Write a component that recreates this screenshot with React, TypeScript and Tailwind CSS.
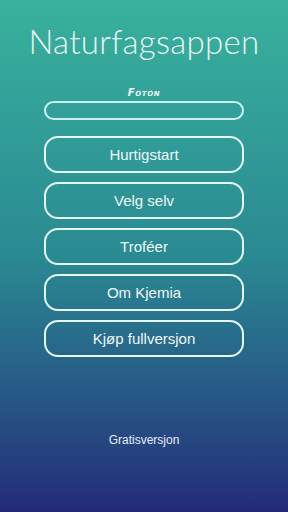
const items = ["Hurtigstart", "Velg selv", "Troféer", "Om Kjemia", "Kjøp fullversjon"];

export default function App() {
  return (
    <div className="w-[288px] h-[512px] flex flex-col items-center bg-gradient-to-b from-[#39b19d] via-[#2a8a92] to-[#242a78] font-['Lato',sans-serif] text-[#eaf6f4]">
      <h1 className="mt-[21px] text-[33px] font-light leading-[40px] tracking-[0.3px]">Naturfagsappen</h1>
      <p className="mt-[26px] text-[10px] leading-[12px] font-black italic tracking-[0.6px] [font-variant:small-caps] font-['DejaVu_Sans',sans-serif]">
        Foton
      </p>
      <div className="mt-[2px] w-[200px] h-[19px] rounded-full border-2 border-[#c9f3ee]" />
      <div className="mt-[16px] flex flex-col gap-[9px]">
        {items.map((t) => (
          <button
            key={t}
            className="w-[200px] h-[37px] rounded-[14px] border-2 border-[#e4f7f5] text-[15px] leading-none text-[#eef8f8] font-['Liberation_Sans',sans-serif]"
          >
            {t}
          </button>
        ))}
      </div>
      <p className="mt-[74px] text-[12px] text-[#e6ecf8] font-['Liberation_Sans',sans-serif]">Gratisversjon</p>
    </div>
  );
}
